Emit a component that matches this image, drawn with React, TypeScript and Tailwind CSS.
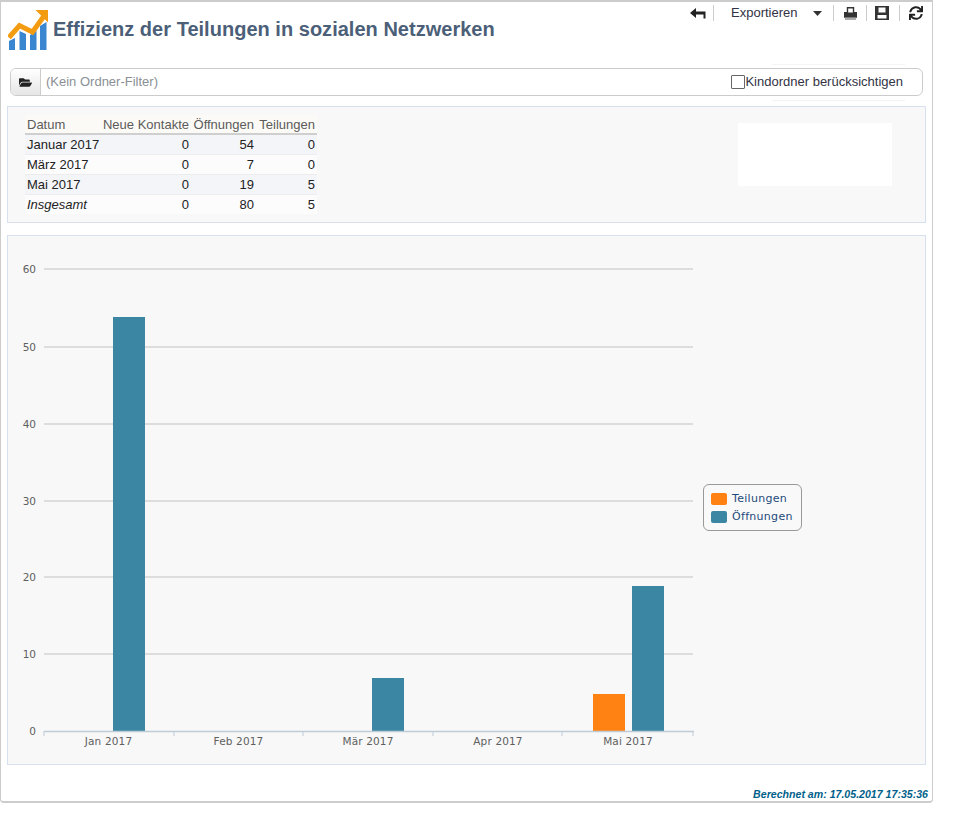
import { FaFolderOpen, FaSync } from "react-icons/fa";

const rows = [
  { d: "Januar 2017", k: 0, o: 54, t: 0 },
  { d: "März 2017", k: 0, o: 7, t: 0 },
  { d: "Mai 2017", k: 0, o: 19, t: 5 },
];

function Logo() {
  return (
    <svg width="42" height="42" viewBox="0 0 42 42" className="shrink-0">
      <g fill="#3a86d1">
        <path d="M1 32 L7 29 V41 H1 Z" />
        <path d="M11.500 22 L18 25 V41 H11.500 Z" />
        <path d="M22 26 L28.500 22 V41 H22 Z" />
        <path d="M32 17 L38.500 13 V41 H32 Z" />
      </g>
      <path d="M1 28.500 L11.500 16.500 L24.500 23 L36 7" fill="none" stroke="#f39c12" strokeWidth="5" />
      <path d="M27.500 1 H40 V13.500 Z" fill="#f39c12" />
    </svg>
  );
}

function Chart() {
  const ys = [
    [60, 269],
    [50, 347],
    [40, 424],
    [30, 501],
    [20, 577],
    [10, 654],
    [0, 731],
  ];
  const ticks = [44, 174, 303, 433, 562, 693];
  const labels = [
    ["Jan 2017", 108.5],
    ["Feb 2017", 238.5],
    ["Mär 2017", 368],
    ["Apr 2017", 498],
    ["Mai 2017", 628],
  ] as const;
  const oy = 236;
  const ox = 8;
  return (
    <svg width="917" height="528" className="block" style={{ fontFamily: "'DejaVu Sans', sans-serif" }}>
      <g transform={`translate(${-ox} ${-oy})`}>
        {ys.map(([v, y]) => (
          <g key={v}>
            <text x="36" y={y + 4} textAnchor="end" fontSize="10.500" fill="#5f5f5f">{v}</text>
            {v !== 0 && <line x1="44" x2="693" y1={y} y2={y} stroke="#d4d4d4" strokeWidth="1.500" />}
          </g>
        ))}
        <rect x="113" y="317" width="32" height="414" fill="#3b87a3" />
        <rect x="372" y="678" width="32" height="53" fill="#3b87a3" />
        <rect x="593" y="694" width="32" height="37" fill="#ff8213" />
        <rect x="632" y="586" width="32" height="145" fill="#3b87a3" />
        <line x1="44" x2="694" y1="731.5" y2="731.5" stroke="#c0cbd8" strokeWidth="1.500" />
        {ticks.map((x) => (
          <line key={x} x1={x} x2={x} y1="731" y2="736" stroke="#c0cbd8" />
        ))}
        {labels.map(([l, x]) => (
          <text key={l} x={x} y="745" textAnchor="middle" fontSize="10.500" letterSpacing="0.15" fill="#5f5f5f">{l}</text>
        ))}
      </g>
    </svg>
  );
}

export default function App() {
  return (
    <div className="w-[956px] h-[828px] bg-white font-['Liberation_Sans',Arial,sans-serif]">
      <div className="relative w-[933px] h-[803px] border-2 border-l border-r border-[#cccccc] rounded-b bg-white flex flex-col">
        <header className="relative h-[66px] shrink-0">
          <div className="flex items-center gap-[3px] pl-[7px] pt-[7px]">
            <Logo />
            <h1 className="text-[20px] leading-[24px] tracking-[0.02px] font-bold text-[#4c5f78] -mt-[3px]">Effizienz der Teilungen in sozialen Netzwerken</h1>
          </div>
          <div className="absolute top-[1px] right-[9px] flex items-center h-[20px] text-[#333333]">
            <svg width="16" height="11" viewBox="0 0 16 11" className="mr-[7px]">
              <path d="M0 5 L6 0 V3.500 H15.500 V10.500 H13.500 V6.500 H6 V10 Z" fill="#222222" />
            </svg>
            <span className="w-px h-[16px] bg-[#cccccc]" />
            <span className="text-[13px] ml-[17px] w-[69px] text-[#333344]">Exportieren</span>
            <svg width="9" height="5" viewBox="0 0 9 5" className="ml-[13px] mr-[11px]"><path d="M0 0 H9 L4.500 5 Z" fill="#333333" /></svg>
            <span className="w-px h-[16px] bg-[#cccccc]" />
            <svg width="13" height="15" viewBox="0 0 14 15" className="ml-[10px] mr-[9px]">
              <path d="M3 0.500 H11 V6 H14 V12 H0 V6 H3 Z M4.500 2 V6.500 H9.500 V2 Z" fill="#333333" fillRule="evenodd" />
              <rect x="1" y="12" width="12" height="2.500" fill="#aaaaaa" />
            </svg>
            <span className="w-px h-[16px] bg-[#cccccc]" />
            <svg width="14" height="14" viewBox="0 0 14 14" className="ml-[8px] mr-[10px]">
              <path d="M0 0 H14 V14 H0 Z M3.500 1.500 V6.500 H10.500 V1.500 Z M2.500 9 V12.500 H11.500 V9 Z" fill="#333333" fillRule="evenodd" />
            </svg>
            <span className="w-px h-[16px] bg-[#cccccc]" />
            <FaSync className="ml-[9px] text-[#222222]" size={14} />
          </div>
          <span className="absolute left-[771px] top-[62px] w-[133px] h-px bg-[#f4f4f4]" />
        </header>
        <div className="mx-[9px] h-[28px] shrink-0 flex items-center border border-[#cccccc] rounded-[6px] overflow-hidden">
          <div className="w-[30px] h-full flex items-center justify-center bg-gradient-to-b from-white to-[#e6e6e6] border-r border-[#cccccc]">
            <FaFolderOpen size={13} className="text-[#222222]" />
          </div>
          <span className="ml-[5px] text-[13px] text-[#8a8f96] flex-1">(Kein Ordner-Filter)</span>
          <span className="w-[14px] h-[14px] border border-[#666666] bg-white rounded-[1px]" />
          <span className="text-[13px] text-[#333344] mr-[19px]">Kindordner berücksichtigen</span>
        </div>
        <section className="relative mt-[10px] mx-[6px] h-[117px] shrink-0 border border-[#d6e0ee] bg-[#f8f8f8] flex justify-between pl-[17px] pt-[8px] pr-[33px]">
          <span className="absolute left-[764px] -top-[7px] w-[133px] h-px bg-[#f4f4f4]" />
          <table className="text-[13px] leading-[15px] border-collapse w-[292px] h-[99px] text-[#222222] table-fixed">
            <thead>
              <tr className="h-[19px] border-b-2 border-[#cfcfcf] bg-[#fbfaf6] text-[#5b5b5b]">
                <th className="font-normal text-left pl-[2px] pt-[1px] w-[70px]">Datum</th>
                <th className="font-normal text-right pt-[1px] w-[94px] whitespace-nowrap">Neue Kontakte</th>
                <th className="font-normal text-right pt-[1px] w-[65px]">Öffnungen</th>
                <th className="font-normal text-right pt-[1px] pr-[2px]">Teilungen</th>
              </tr>
            </thead>
            <tbody>
              {rows.map((r, i) => (
                <tr key={r.d} className={`h-[20px] border-b border-[#ececec] ${i % 2 === 0 ? "bg-[#f4f5f8]" : "bg-[#fcfcfc]"}`}>
                  <td className="pl-[2px] pt-[1px] whitespace-nowrap">{r.d}</td>
                  <td className="text-right pt-[1px]">{r.k}</td>
                  <td className="text-right pt-[1px]">{r.o}</td>
                  <td className="text-right pt-[1px] pr-[2px]">{r.t}</td>
                </tr>
              ))}
              <tr className="h-[20px] bg-[#fcfcfc]">
                <td className="pl-[2px] pt-[1px] italic">Insgesamt</td>
                <td className="text-right pt-[1px]">0</td>
                <td className="text-right pt-[1px]">80</td>
                <td className="text-right pt-[1px] pr-[2px]">5</td>
              </tr>
            </tbody>
          </table>
          <div className="w-[154px] h-[63px] mt-[8px] bg-white" />
        </section>
        <section className="relative mt-[12px] mx-[6px] h-[530px] shrink-0 border border-[#d6e0ee] bg-[#f8f8f8]">
          <Chart />
          <div className="absolute left-[695px] top-[248px] w-[99px] h-[47px] border border-[#999999] rounded-[6px] bg-[#f9f9f9] flex flex-col justify-center gap-[3px] pl-[7px] font-['DejaVu_Sans',sans-serif] text-[11px] leading-[15px] tracking-[0.3px] text-[#1d4a7a]">
            <div className="flex items-center gap-[5px]"><span className="w-[16px] h-[12px] rounded-[2px] bg-[#ff8213]" />Teilungen</div>
            <div className="flex items-center gap-[5px]"><span className="w-[16px] h-[12px] rounded-[2px] bg-[#3b87a3]" />Öffnungen</div>
          </div>
        </section>
        <footer className="absolute right-[4px] bottom-[1px] text-[10.600px] leading-[12px] font-bold italic text-[#005f8a]">Berechnet am: 17.05.2017 17:35:36</footer>
      </div>
    </div>
  );
}
